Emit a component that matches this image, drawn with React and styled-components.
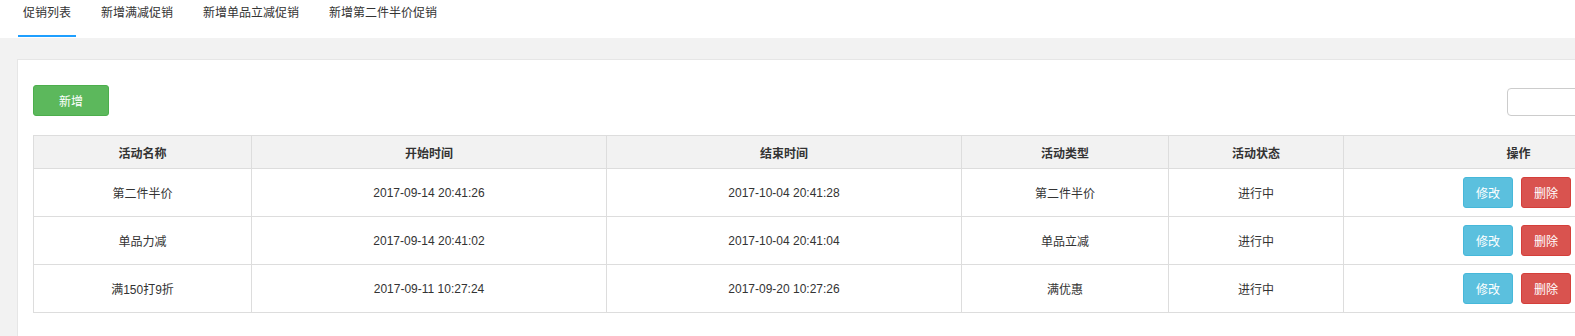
import React from 'react';
import styled, { createGlobalStyle } from 'styled-components';

const GlobalStyle = createGlobalStyle`
  html, body {
    margin: 0;
    padding: 0;
    overflow: hidden;
    background: #f2f2f2;
    font-family: "Liberation Sans", "Noto Sans CJK SC", sans-serif;
    font-size: 12px;
    color: #333;
  }
`;

const Page = styled.div`
  width: 1720px;
`;

const TabBar = styled.ul`
  display: flex;
  margin: 0;
  padding: 0 0 0 18px;
  height: 38px;
  background: #fff;
  list-style: none;
`;

const Tab = styled.li`
  height: 37px;
  line-height: 27px;
  padding: 0 5px;
  margin-right: 20px;
  box-sizing: border-box;
  border-bottom: 2px solid ${(p) => (p.$active ? '#1e9fff' : 'transparent')};
  font-size: 12px;
  color: #333;
  cursor: pointer;
`;

const Content = styled.div`
  padding: 21px 0 0 17px;
`;

const Panel = styled.div`
  background: #fff;
  border: 1px solid #e6e6e6;
  padding: 25px 15px 40px 15px;
`;

const Toolbar = styled.div`
  display: flex;
  justify-content: space-between;
  align-items: center;
  margin-bottom: 19px;
`;

const Button = styled.button`
  font-family: inherit;
  font-size: 12px;
  color: #fff;
  border: 1px solid;
  border-radius: 3px;
  cursor: pointer;
  padding: 0;
  width: ${(p) => p.$width || 50}px;
  height: ${(p) => p.$height || 31}px;
  background: ${(p) => p.$bg};
  border-color: ${(p) => p.$border};
`;

const SearchInput = styled.input`
  width: 197px;
  height: 28px;
  box-sizing: border-box;
  border: 1px solid #ccc;
  border-radius: 4px;
  margin-top: 2px;
`;

const Table = styled.table`
  border-collapse: collapse;
  table-layout: fixed;
  width: 1660px;
`;

const HeadCell = styled.th`
  height: 32px;
  padding: 0;
  background: #f2f2f2;
  border: 1px solid #ddd;
  font-weight: bold;
  font-size: 12px;
  color: #333;
  text-align: center;
`;

const Cell = styled.td`
  height: 47px;
  padding: 0;
  border: 1px solid #ddd;
  font-size: 12px;
  color: #333;
  text-align: center;
`;

const Actions = styled.div`
  display: flex;
  justify-content: center;
  gap: 8px;
  padding-right: 3px;
`;

const columns = [
  { title: '活动名称', width: 218 },
  { title: '开始时间', width: 355 },
  { title: '结束时间', width: 355 },
  { title: '活动类型', width: 207 },
  { title: '活动状态', width: 175 },
  { title: '操作', width: 350 },
];

const rows = [
  ['第二件半价', '2017-09-14 20:41:26', '2017-10-04 20:41:28', '第二件半价', '进行中'],
  ['单品力减', '2017-09-14 20:41:02', '2017-10-04 20:41:04', '单品立减', '进行中'],
  ['满150打9折', '2017-09-11 10:27:24', '2017-09-20 10:27:26', '满优惠', '进行中'],
];

export default function App() {
  return (
    <Page>
      <GlobalStyle />
      <TabBar>
        <Tab $active>促销列表</Tab>
        <Tab>新增满减促销</Tab>
        <Tab>新增单品立减促销</Tab>
        <Tab>新增第二件半价促销</Tab>
      </TabBar>
      <Content>
        <Panel>
          <Toolbar>
            <Button $width={76} $height={31} $bg="#5cb85c" $border="#4cae4c">
              新增
            </Button>
            <SearchInput />
          </Toolbar>
          <Table>
            <colgroup>
              {columns.map((c) => (
                <col key={c.title} style={{ width: c.width }} />
              ))}
            </colgroup>
            <thead>
              <tr>
                {columns.map((c) => (
                  <HeadCell key={c.title}>{c.title}</HeadCell>
                ))}
              </tr>
            </thead>
            <tbody>
              {rows.map((r, i) => (
                <tr key={i}>
                  {r.map((v, j) => (
                    <Cell key={j}>{v}</Cell>
                  ))}
                  <Cell>
                    <Actions>
                      <Button $bg="#5bc0de" $border="#46b8da">修改</Button>
                      <Button $bg="#d9534f" $border="#d43f3a">删除</Button>
                    </Actions>
                  </Cell>
                </tr>
              ))}
            </tbody>
          </Table>
        </Panel>
      </Content>
    </Page>
  );
}
